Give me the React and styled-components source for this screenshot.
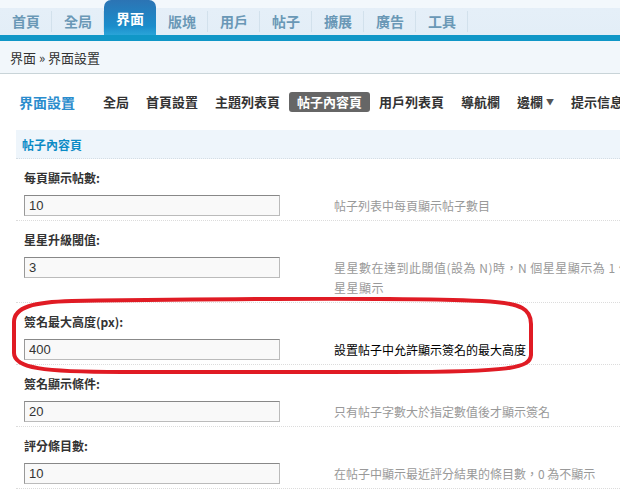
import React from "react";
import styled, { createGlobalStyle } from "styled-components";

const GlobalStyle = createGlobalStyle`
  html, body {
    margin: 0;
    padding: 0;
    background: #fff;
    overflow: hidden;
  }
  body {
    font-family: "Noto Sans CJK TC", "Liberation Sans", sans-serif;
    color: #333;
  }
`;

const tabs = ["首頁", "全局", "界面", "版塊", "用戶", "帖子", "擴展", "廣告", "工具"];
const subItems = ["全局", "首頁設置", "主題列表頁", "帖子內容頁", "用戶列表頁", "導航欄", "邊欄", "提示信息"];

const rows = [
  { label: "每頁顯示帖數:", value: "10", desc: "帖子列表中每頁顯示帖子數目" },
  { label: "星星升級閾值:", value: "3", wide: true },
  { label: "簽名最大高度(px):", value: "400", desc: "設置帖子中允許顯示簽名的最大高度", marked: true },
  { label: "簽名顯示條件:", value: "20", desc: "只有帖子字數大於指定數值後才顯示簽名" },
  { label: "評分條目數:", value: "10", desc: "在帖子中顯示最近評分結果的條目數，0 為不顯示" },
];

export default function App() {
  return (
    <Page>
      <GlobalStyle />
      <Header>
        {tabs.map((t) => (
          <Tab key={t} $active={t === "界面"}>
            {t}
          </Tab>
        ))}
      </Header>
      <Crumbs>界面 » 界面設置</Crumbs>
      <SubNav>
        <SubTitle>界面設置</SubTitle>
        {subItems.map((s) => (
          <SubItem key={s} $active={s === "帖子內容頁"}>
            {s}
            {s === "邊欄" && <Caret>▼</Caret>}
          </SubItem>
        ))}
      </SubNav>
      <Content>
        <SectionHead>帖子內容頁</SectionHead>
        {rows.map((r) => (
          <Row key={r.label}>
            <Label>{r.label}</Label>
            <Field>
              <Input defaultValue={r.value} readOnly />
              <Desc $strong={r.marked} $wide={r.wide}>
                {r.wide ? (
                  <>
                    星星數在達到此閾值(設為 N)時，N 個星星顯示為 1 個
                    <br />
                    星星顯示
                  </>
                ) : (
                  r.desc
                )}
              </Desc>
            </Field>
            {r.marked && (
              <Mark viewBox="0 0 524 78" width="524" height="78">
                <path
                  d="M60 4 C 200 2 380 0 470 4 C 512 6 519 13 519 27 L 519 58 C 518 71 500 75 380 75 L 110 75 C 30 75 2 71 2 56 L 2 25 C 2 10 22 5 60 4 Z"
                  fill="none"
                  stroke="#e01b24"
                  strokeWidth="4"
                />
              </Mark>
            )}
          </Row>
        ))}
      </Content>
    </Page>
  );
}

const Page = styled.div`
  width: 620px;
  height: 496px;
  overflow: hidden;
  background: #fff;
`;

const Header = styled.div`
  display: flex;
  align-items: flex-end;
  height: 35px;
  background: linear-gradient(#f3f8fc 0, #f3f8fc 8px, #e5eff8 8px, #e3eef7 100%);
  border-bottom: 6px solid #1097c7;
`;

const Tab = styled.div`
  position: relative;
  width: 52px;
  text-align: center;
  font-size: 14px;
  font-weight: 700;
  height: ${(p) => (p.$active ? "35px" : "27px")};
  line-height: ${(p) => (p.$active ? "37px" : "27px")};
  color: ${(p) => (p.$active ? "#fff" : "#6a98b6")};
  background: ${(p) => (p.$active ? "linear-gradient(#2c74b4, #1b8dcb 75%, #2aa4d8)" : "transparent")};
  border-radius: ${(p) => (p.$active ? "7px 7px 0 0" : "0")};
  &::after {
    content: "";
    position: absolute;
    right: 0;
    top: 3px;
    bottom: 3px;
    width: 1px;
    background: ${(p) => (p.$active ? "transparent" : "#d2e1ec")};
  }
`;

const Crumbs = styled.div`
  height: 32px;
  line-height: 34px;
  padding-left: 10px;
  font-size: 13px;
  color: #333;
  background: #f2f7fb;
  border-bottom: 1px solid #c9d4d8;
`;

const SubNav = styled.div`
  display: flex;
  align-items: center;
  height: 20px;
  margin: 18px 0 18px;
  padding-left: 19px;
  white-space: nowrap;
`;

const SubTitle = styled.div`
  font-size: 14px;
  font-weight: 700;
  color: #2a8ccd;
  margin-right: 20px;
`;

const SubItem = styled.div`
  flex-shrink: 0;
  height: 20px;
  line-height: 20px;
  padding: 0 8px;
  margin-right: 1px;
  font-size: 13px;
  font-weight: 700;
  border-radius: 3px;
  color: ${(p) => (p.$active ? "#fff" : "#333")};
  background: ${(p) => (p.$active ? "#666" : "transparent")};
`;

const Caret = styled.span`
  font-size: 8px;
  margin-left: 3px;
  vertical-align: 2px;
  color: #555;
`;

const Content = styled.div`
  margin-left: 16px;
`;

const SectionHead = styled.div`
  height: 28px;
  line-height: 29px;
  padding-left: 6px;
  font-size: 12px;
  font-weight: 700;
  color: #0b8bc6;
  background: #eef5fb;
  border-bottom: 1px dotted #d4dde4;
`;

const Row = styled.div`
  position: relative;
  padding: 9px 0 4px 8px;
  border-bottom: 1px dotted #dcdcdc;
`;

const Label = styled.div`
  height: 20px;
  line-height: 20px;
  font-size: 12px;
  font-weight: 700;
  color: #333;
  margin-bottom: 7px;
`;

const Field = styled.div`
  display: flex;
  align-items: flex-start;
`;

const Input = styled.input`
  flex-shrink: 0;
  box-sizing: border-box;
  width: 256px;
  height: 21px;
  margin: 0;
  padding: 0 4px;
  font-family: "Liberation Sans", Arial, sans-serif;
  font-size: 13px;
  color: #333;
  background: #f9f9f9;
  border: 1px solid #bbb;
  border-top-color: #888;
  border-left-color: #999;
  outline: none;
`;

const Desc = styled.div`
  flex-shrink: 0;
  margin-left: 54px;
  padding-top: 1px;
  line-height: 20px;
  font-size: 12px;
  letter-spacing: ${(p) => (p.$wide ? "0.5px" : "0")};
  white-space: nowrap;
  color: ${(p) => (p.$strong ? "#000" : "#999")};
`;

const Mark = styled.svg`
  position: absolute;
  left: -4px;
  top: -6px;
  pointer-events: none;
`;
